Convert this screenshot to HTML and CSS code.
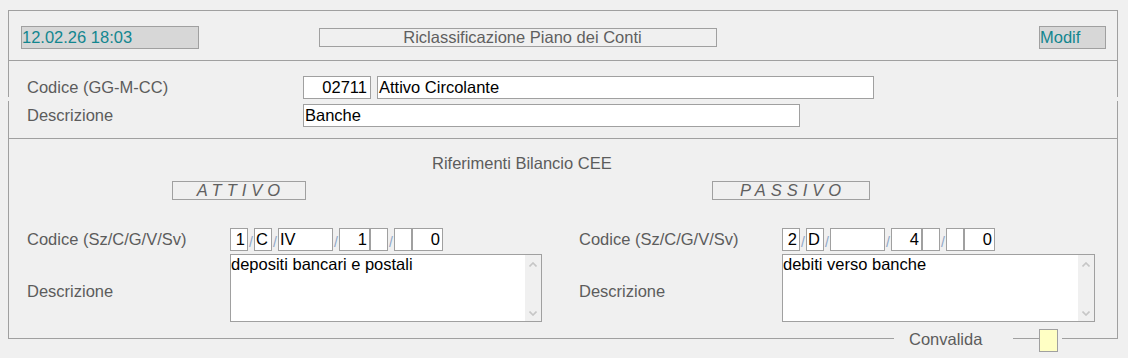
FILE: index.html
```html
<!DOCTYPE html>
<html lang="it">
<head>
    <meta charset="UTF-8">
    <title>Riclassificazione Piano dei Conti</title>
    <link rel="stylesheet" href="styles.css">
</head>
<body>
    <div class="frame">
        <div class="head">
            <div class="stamp date">12.02.26 18:03</div>
            <div class="title">Riclassificazione Piano dei Conti</div>
            <div class="stamp mode">Modif</div>
        </div>

        <div class="account">
            <div class="row">
                <span class="label">Codice (GG-M-CC)</span>
                <span class="field code">02711</span>
                <span class="field group">Attivo Circolante</span>
            </div>
            <div class="row">
                <span class="label">Descrizione</span>
                <span class="field name">Banche</span>
            </div>
        </div>

        <div class="cee">
            <div class="cee-title">Riferimenti Bilancio CEE</div>
            <div class="cols">
                <div class="col">
                    <div class="side"><span class="side-box attivo">ATTIVO</span></div>
                    <div class="code-row">
                        <span class="label">Codice (Sz/C/G/V/Sv)</span>
                        <div class="parts">
                            <span class="part s right">1</span><span class="sep">/</span>
                            <span class="part s">C</span><span class="sep">/</span>
                            <span class="part w">IV</span><span class="sep">/</span>
                            <span class="part m right">1</span><span class="part s"></span><span class="sep">/</span>
                            <span class="part s"></span><span class="part m right">0</span>
                        </div>
                    </div>
                    <div class="desc-row">
                        <span class="label">Descrizione</span>
                        <div class="memo">
                            <div class="memo-text">depositi bancari e postali</div>
                            <div class="memo-bar">
                                <svg width="8" height="5" viewBox="0 0 8 5"><path d="M0.5 4.5 L4 1 L7.5 4.5" fill="none" stroke="#c6c6c6" stroke-width="1.6"/></svg>
                                <svg width="8" height="5" viewBox="0 0 8 5"><path d="M0.5 0.5 L4 4 L7.5 0.5" fill="none" stroke="#c6c6c6" stroke-width="1.6"/></svg>
                            </div>
                        </div>
                    </div>
                </div>
                <div class="col">
                    <div class="side"><span class="side-box passivo">PASSIVO</span></div>
                    <div class="code-row">
                        <span class="label">Codice (Sz/C/G/V/Sv)</span>
                        <div class="parts">
                            <span class="part s right">2</span><span class="sep">/</span>
                            <span class="part s">D</span><span class="sep">/</span>
                            <span class="part w"></span><span class="sep">/</span>
                            <span class="part m right">4</span><span class="part s"></span><span class="sep">/</span>
                            <span class="part s"></span><span class="part m right">0</span>
                        </div>
                    </div>
                    <div class="desc-row">
                        <span class="label">Descrizione</span>
                        <div class="memo wide">
                            <div class="memo-text">debiti verso banche</div>
                            <div class="memo-bar">
                                <svg width="8" height="5" viewBox="0 0 8 5"><path d="M0.5 4.5 L4 1 L7.5 4.5" fill="none" stroke="#c6c6c6" stroke-width="1.6"/></svg>
                                <svg width="8" height="5" viewBox="0 0 8 5"><path d="M0.5 0.5 L4 4 L7.5 0.5" fill="none" stroke="#c6c6c6" stroke-width="1.6"/></svg>
                            </div>
                        </div>
                    </div>
                </div>
            </div>
        </div>

        <div class="foot">
            <span class="edge edge-left"></span>
            <span class="ok-label">Convalida</span>
            <span class="edge edge-mid"></span>
            <span class="ok-box"></span>
            <span class="edge edge-right"></span>
        </div>
    </div>
</body>
</html>
```

FILE: styles.css
```css
body {
    margin: 0;
    background: #f0f0f0;
    font-family: "Liberation Sans", Arial, sans-serif;
    font-size: 16.5px;
    color: #000;
}
.frame {
    width: 1110px;
    margin: 10px 0 0 8px;
}
.head {
    display: flex;
    align-items: center;
    height: 51px;
    box-sizing: border-box;
    border: 1px solid #a0a0a0;
    padding: 4px 11px 0 12px;
}
.stamp {
    height: 23px;
    box-sizing: border-box;
    border: 1px solid #a0a0a0;
    background: #d7d7d7;
    color: #12868f;
    line-height: 21px;
    white-space: nowrap;
}
.date {
    width: 178px;
}
.mode {
    width: 67px;
    margin-left: auto;
}
.title {
    width: 398px;
    height: 19px;
    box-sizing: border-box;
    margin-left: 120px;
    border: 1px solid #a0a0a0;
    color: #5f5f5f;
    text-align: center;
    line-height: 17px;
    padding-left: 9px;
    white-space: nowrap;
}
.label {
    color: #5c5c5c;
    white-space: nowrap;
}
.account {
    height: 78px;
    box-sizing: border-box;
    padding: 15px 0 0 19px;
    border-bottom: 1px solid #a0a0a0;
    background:
        linear-gradient(#a0a0a0, #a0a0a0) left top / 1px 36px no-repeat,
        linear-gradient(#a0a0a0, #a0a0a0) right top / 1px 36px no-repeat,
        linear-gradient(#a0a0a0, #a0a0a0) left bottom / 1px 37px no-repeat,
        linear-gradient(#a0a0a0, #a0a0a0) right bottom / 1px 37px no-repeat;
}
.row {
    display: flex;
    align-items: center;
    height: 23px;
    margin-bottom: 5px;
}
.row .label {
    width: 276px;
}
.field {
    height: 23px;
    box-sizing: border-box;
    border: 1px solid #a0a0a0;
    background: #fff;
    line-height: 21px;
    padding-left: 1px;
}
.code {
    width: 68px;
    text-align: right;
    padding-right: 3px;
}
.group {
    width: 497px;
    margin-left: 6px;
}
.name {
    width: 497px;
}
.cee {
    height: 190px;
    box-sizing: border-box;
    border-left: 1px solid #a0a0a0;
    border-right: 1px solid #a0a0a0;
    padding: 15px 0 0 18px;
}
.cee-title {
    margin-left: 405px;
    line-height: 18px;
    color: #5c5c5c;
}
.cols {
    display: flex;
}
.col {
    width: 552px;
    flex: none;
}
.side {
    width: 423px;
    display: flex;
    justify-content: center;
    margin-top: 9px;
}
.side-box {
    height: 19px;
    box-sizing: border-box;
    border: 1px solid #a0a0a0;
    color: #606060;
    font-style: italic;
    letter-spacing: 5px;
    line-height: 17px;
    text-align: center;
    padding-left: 5px;
}
.attivo {
    width: 134px;
}
.passivo {
    width: 158px;
}
.code-row {
    display: flex;
    align-items: center;
    margin-top: 28px;
    height: 23px;
}
.code-row .label,
.desc-row .label {
    width: 203px;
    flex: none;
}
.parts {
    display: flex;
    height: 23px;
}
.part {
    height: 23px;
    box-sizing: border-box;
    border: 1px solid #a0a0a0;
    background: #fff;
    line-height: 21px;
    padding: 0 2px 0 1px;
}
.part.right {
    text-align: right;
}
.part.s {
    width: 18px;
}
.part.w {
    width: 55px;
}
.part.m {
    width: 31px;
}
.sep {
    width: 6px;
    align-self: flex-end;
    font-size: 14px;
    line-height: 15px;
    color: #8ea6c6;
    padding-left: 1px;
    margin-bottom: 1px;
    box-sizing: border-box;
    overflow: hidden;
}
.desc-row {
    display: flex;
    align-items: center;
    margin-top: 3px;
}
.desc-row .label {
    padding-top: 6px;
}
.memo {
    display: flex;
    width: 312px;
    height: 68px;
    box-sizing: border-box;
    border: 1px solid #a0a0a0;
    background: #fff;
}
.memo.wide {
    width: 313px;
}
.memo-text {
    flex: 1;
    line-height: 19px;
}
.memo-bar {
    width: 16px;
    background: #f0f0f0;
    display: flex;
    flex-direction: column;
    justify-content: space-between;
    align-items: center;
    padding: 7px 0 5px;
    box-sizing: border-box;
}
.foot {
    display: flex;
    align-items: flex-start;
    height: 23px;
}
.edge {
    height: 10px;
    box-sizing: border-box;
    border-bottom: 1px solid #a0a0a0;
}
.edge-left {
    width: 886px;
    border-left: 1px solid #a0a0a0;
}
.ok-label {
    width: 71px;
    margin-left: 15px;
    line-height: 20px;
    color: #5c5c5c;
}
.edge-mid {
    width: 26px;
    margin-left: 33px;
}
.ok-box {
    width: 19px;
    height: 23px;
    box-sizing: border-box;
    border: 1px solid #a0a0a0;
    background: #ffffc4;
}
.edge-right {
    width: 56px;
    margin-left: 4px;
    border-right: 1px solid #a0a0a0;
}
```
